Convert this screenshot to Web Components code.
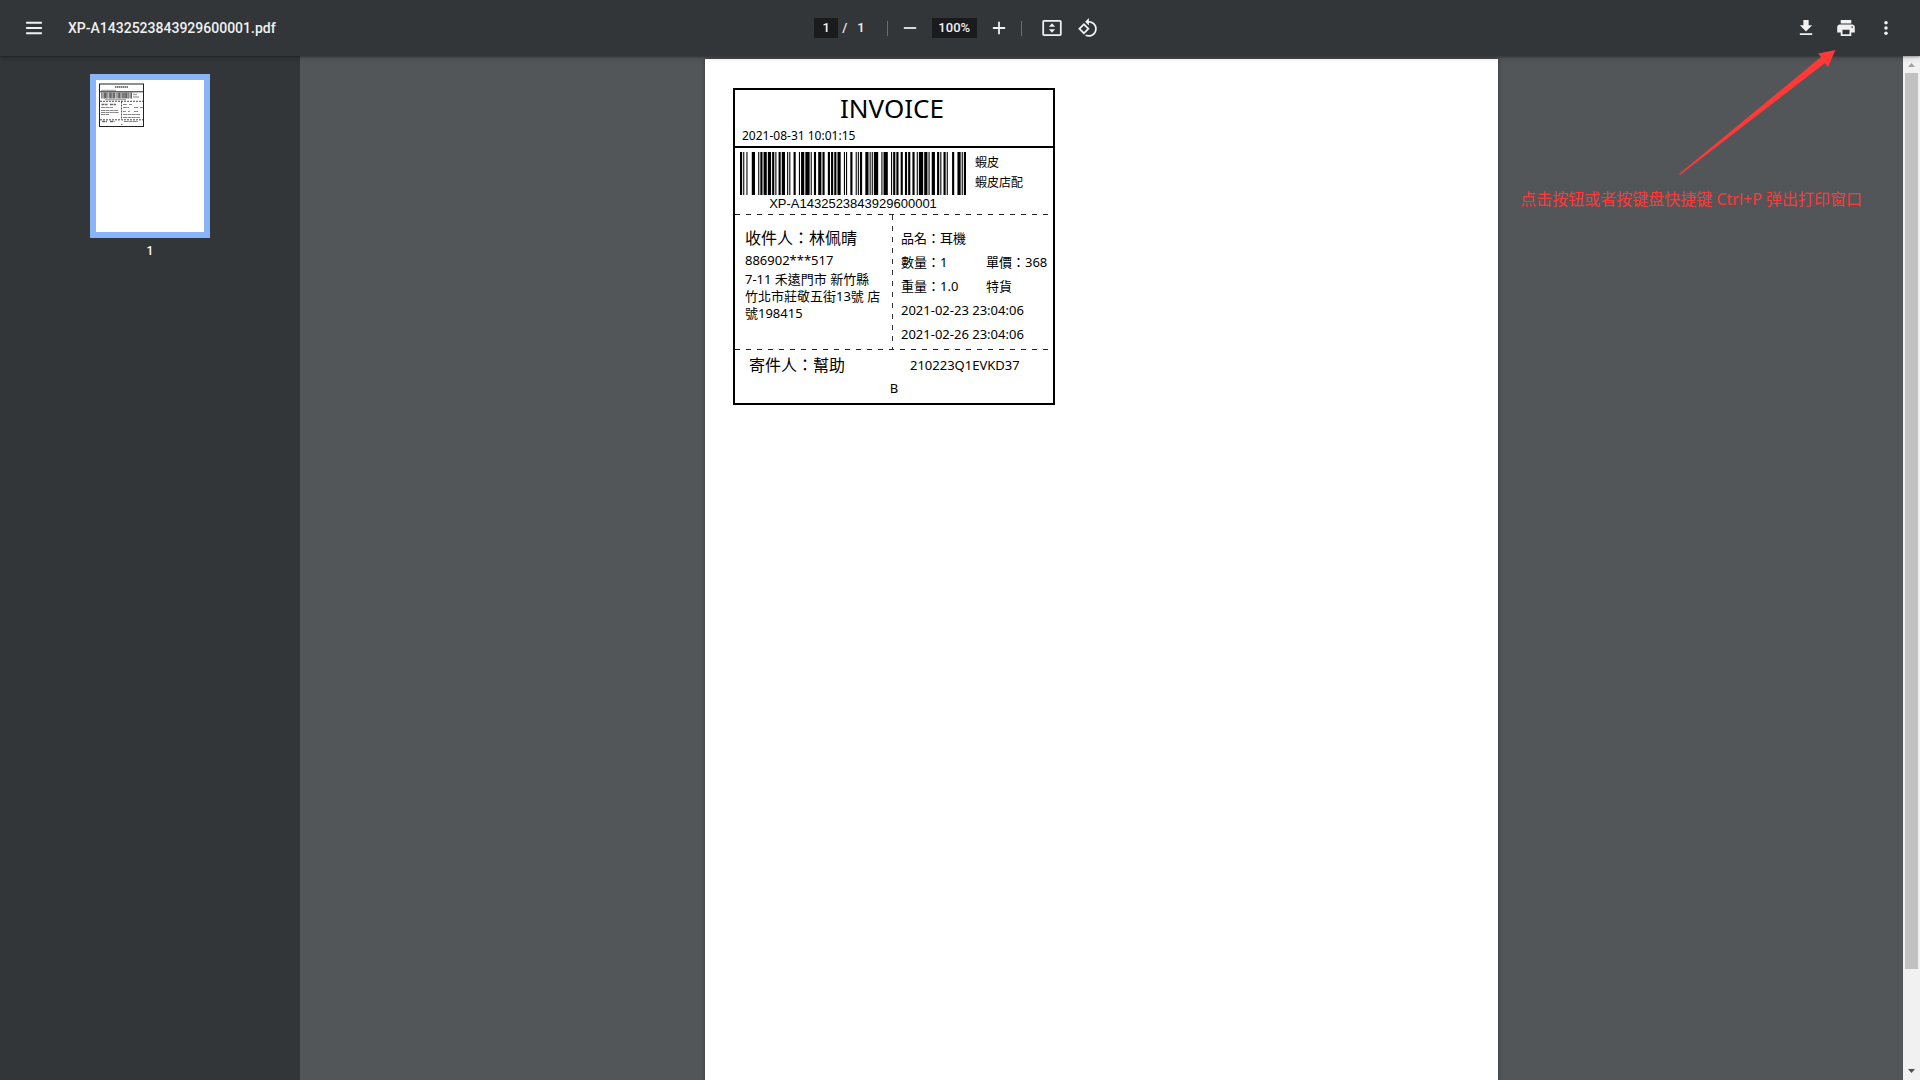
<!DOCTYPE html>
<html lang="zh-Hant">
<head>
<meta charset="utf-8">
<title>XP-A1432523843929600001.pdf</title>
<style>
  html, body { margin: 0; height: 100%; overflow: hidden; background: #525659; }
  body { font-family: Roboto, "Liberation Sans", sans-serif; }
</style>
</head>
<body>
<pdf-viewer></pdf-viewer>
<script>
const define = (name, markup, ready) => {
  const template = document.createElement('template');
  template.innerHTML = markup;
  customElements.define(name, class extends HTMLElement {
    constructor() {
      super();
      this.attachShadow({ mode: 'open' }).append(template.content.cloneNode(true));
    }
    connectedCallback() { if (ready) ready(this, this.shadowRoot); }
  });
};

const ICONS = {
  menu: '<path d="M3 5h18v2.2H3zM3 10.9h18v2.2H3zM3 16.8h18V19H3z"/>',
  minus: '<path d="M5 11h14v2H5z"/>',
  plus: '<path d="M19 13h-6v6h-2v-6H5v-2h6V5h2v6h6z"/>',
  fit: '<path fill-rule="evenodd" d="M3 3h18c1.1 0 2 .9 2 2v14c0 1.100-.9 2-2 2H3c-1.100 0-2-.9-2-2V5c0-1.100.9-2 2-2zm0 2v14h18V5H3z"/><path d="M12 6.500l3.500 4h-7zM12 17.500l-3.500-4h7z"/>',
  rotate: '<path d="M7.340 6.410L.86 12.900l6.490 6.480 6.490-6.480-6.500-6.490zM3.690 12.900l3.660-3.660L11 12.900l-3.660 3.660-3.650-3.660zm15.670-6.260C17.610 4.880 15.300 4 13 4V.76L8.760 5 13 9.240V6c1.790 0 3.580.68 4.950 2.050 2.730 2.730 2.730 7.170 0 9.900C16.580 19.320 14.790 20 13 20c-.97 0-1.940-.21-2.840-.61l-1.490 1.490C10.020 21.620 11.510 22 13 22c2.300 0 4.610-.88 6.360-2.640 3.520-3.510 3.520-9.210 0-12.720z"/>',
  download: '<path d="M19 9h-4V3H9v6H5l7 7 7-7zM5 18v2h14v-2H5z"/>',
  print: '<path d="M19 8H5c-1.660 0-3 1.340-3 3v6h4v4h12v-4h4v-6c0-1.660-1.340-3-3-3zm-3 11H8v-5h8v5zm3-7c-.55 0-1-.45-1-1s.45-1 1-1 1 .45 1 1-.45 1-1 1zm-1-9H6v4h12V3z"/>',
  more: '<circle cx="12" cy="6" r="2"/><circle cx="12" cy="12" r="2"/><circle cx="12" cy="18" r="2"/>'
};

define('tool-button', `
<style>
  :host { display: block; }
  button { display: grid; place-items: center; width: 32px; height: 32px; padding: 0; border: 0; border-radius: 50%; background: none; color: #f1f1f1; cursor: pointer; }
  button:hover { background: rgba(255,255,255,.08); }
  svg { width: 22px; height: 22px; fill: currentColor; display: block; }
</style>
<button type="button"><svg viewBox="-.5 -.5 25 25" aria-hidden="true"></svg></button>`,
(host, root) => {
  root.querySelector('svg').innerHTML = ICONS[host.getAttribute('icon')];
  root.querySelector('button').setAttribute('aria-label', host.getAttribute('label'));
});

define('pdf-toolbar', `
<style>
  :host { display: grid; grid-template-columns: 1fr auto 1fr; align-items: center; height: 56px; box-sizing: border-box; padding: 0 18px;
    background: #323639; color: #f1f1f1; font: 500 13px/20px Roboto, sans-serif; position: relative; z-index: 1;
    box-shadow: 0 1px 2px rgba(0,0,0,.3), 0 2px 6px rgba(0,0,0,.15); }
  .start, .middle, .end { display: flex; align-items: center; }
  .start { gap: 18px; }
  .middle { padding-right: 2px; }
  .end { justify-content: flex-end; gap: 8px; }
  h1 { margin: 0; font: 500 14px/20px Roboto, sans-serif; }
  input { box-sizing: border-box; height: 20px; padding: 0; border: 0; background: #191b1c; color: #f1f1f1; font: inherit; text-align: center; }
  .page { width: 24px; }
  .zoom { width: 45px; margin: 0 6px; }
  .total { display: flex; gap: 10px; padding: 0 16px 0 4px; }
  i { width: 1px; height: 15px; margin: 0 6px; background: #6b6e70; }
  .fit { display: flex; gap: 4px; margin-left: 8px; }
</style>
<div class="start"><tool-button icon="menu" label="Menu"></tool-button><h1>XP-A1432523843929600001.pdf</h1></div>
<div class="middle">
  <input class="page" aria-label="Page number" value="1">
  <div class="total"><span>/</span><span>1</span></div>
  <i></i>
  <tool-button icon="minus" label="Zoom out"></tool-button>
  <input class="zoom" aria-label="Zoom level" value="100%">
  <tool-button icon="plus" label="Zoom in"></tool-button>
  <i></i>
  <div class="fit">
    <tool-button icon="fit" label="Fit to page"></tool-button>
    <tool-button icon="rotate" label="Rotate counterclockwise"></tool-button>
  </div>
</div>
<div class="end">
  <tool-button icon="download" label="Download"></tool-button>
  <tool-button icon="print" label="Print"></tool-button>
  <tool-button icon="more" label="More actions"></tool-button>
</div>`);

/* Code 128 symbol widths, keyed by symbol value. */
const SYMBOLS = { 0: '212222', 13: '122132', 14: '122231', 17: '123221', 32: '232121', 33: '111323', 38: '132311', 43: '112331',
  48: '313121', 52: '213311', 56: '331121', 71: '122114', 92: '111143', 96: '114311', 99: '113141', 100: '114131', 104: '211214', stop: '2331112' };
/* Start B, "XP-A", switch to C, nine digit pairs, switch to B, "1", checksum, stop. */
const CODE = [104, 56, 48, 13, 33, 99, 14, 32, 52, 38, 43, 92, 96, 0, 0, 100, 17, 71, 'stop'];
const barcodePath = () => {
  let x = 0, d = '';
  for (const value of CODE) {
    [...SYMBOLS[value]].forEach((w, i) => {
      if (i % 2 === 0) d += `M${x} 0h${w}v1h-${w}z`;
      x += Number(w);
    });
  }
  return { d, width: x };
};

define('bar-code', `
<style>
  :host { display: block; width: 226px; text-align: center; font: 13px/18px "Liberation Sans", sans-serif; }
  svg { display: block; width: 100%; height: 43px; }
</style>
<svg preserveAspectRatio="none" aria-hidden="true"><path fill="#000"/></svg>
<slot></slot>`,
(host, root) => {
  const { d, width } = barcodePath();
  root.querySelector('svg').setAttribute('viewBox', `0 0 ${width} 1`);
  root.querySelector('path').setAttribute('d', d);
});

define('shipping-label', `
<style>
  :host { display: block; box-sizing: border-box; width: 322px; border: 2px solid #000; color: #000;
    font: 13px/24px "Noto Sans", "Noto Sans CJK TC", sans-serif; white-space: nowrap;
    --across: repeating-linear-gradient(90deg, #222 0 5px, transparent 5px 11px);
    --down: repeating-linear-gradient(180deg, #333 0 5px, transparent 5px 11px); }
  h2, p { margin: 0; font-weight: 400; }
  header { padding-bottom: 2px; border-bottom: 2px solid #000; }
  h2 { padding: 0 4px 2px 0; font-size: 26px; line-height: 36px; text-align: center; }
  header p { padding-left: 7px; font-size: 12px; line-height: 16px; }
  .code { display: flex; gap: 9px; padding: 4px 5px 1px; }
  .carrier { padding-top: 1px; font-size: 12px; line-height: 20px; }
  .parties { display: grid; grid-template-columns: 157px 1px 1fr; padding-top: 1px; background: var(--across) top / 100% 1px no-repeat; }
  .rule { background: var(--down); }
  .to { padding: 12px 0 0 10px; line-height: 17px; }
  .name { font-size: 16px; line-height: 22px; }
  .phone { line-height: 22px; }
  .goods { padding: 11px 0 3px 8px; }
  .pair { display: grid; grid-template-columns: 85px auto; }
  footer { padding: 4px 0; background: var(--across) top / 100% 1px no-repeat; }
  .from { display: grid; grid-template-columns: 161px auto; align-items: center; padding-left: 14px; }
  .zone { line-height: 22px; text-align: center; }
</style>
<header><h2>INVOICE</h2><p>2021-08-31 10:01:15</p></header>
<div class="code">
  <bar-code>XP-A1432523843929600001</bar-code>
  <div class="carrier"><p>蝦皮</p><p>蝦皮店配</p></div>
</div>
<div class="parties">
  <div class="to">
    <p class="name">收件人：林佩晴</p>
    <p class="phone">886902***517</p>
    <p>7-11 禾遠門市 新竹縣<br>竹北市莊敬五街13號 店<br>號198415</p>
  </div>
  <div class="rule"></div>
  <div class="goods">
    <p>品名：耳機</p>
    <div class="pair"><span>數量：1</span><span>單價：368</span></div>
    <div class="pair"><span>重量：1.0</span><span>特貨</span></div>
    <p>2021-02-23 23:04:06</p>
    <p>2021-02-26 23:04:06</p>
  </div>
</div>
<footer>
  <div class="from"><span class="name">寄件人：幫助</span><span>210223Q1EVKD37</span></div>
  <p class="zone">B</p>
</footer>`);

define('page-thumbnail', `
<style>
  :host { display: flex; flex-direction: column; align-items: center; gap: 3px; color: #fff; font: 500 12px/20px Roboto, sans-serif; }
  button { display: block; padding: 0; border: 6px solid #8ab4f8; background: #fff; }
  svg { display: block; width: 108px; height: 152px; }
</style>
<button type="button" aria-label="Page 1">
  <svg viewBox="0 0 108 152" fill="none" stroke="#222" aria-hidden="true">
    <rect x="3.500" y="4" width="44" height="42.500"/>
    <path d="M3 11.800h45"/>
    <path stroke="#777" stroke-width="2.200" stroke-dasharray="1.500 .5" d="M19 7h13"/>
    <path stroke="#999" d="M5 10.300h15"/>
    <g class="bars"></g>
    <path stroke="#aaa" stroke-width="1.400" d="M37 14.500h4M37 17h6M9 19.500h21"/>
    <path stroke-width=".8" stroke-dasharray="2 1" d="M4 21.300h44M4 39.800h44M25.500 21.500v18"/>
    <path stroke="#666" stroke-width="1.500" stroke-dasharray="3 .6" d="M5.500 24.500h6M14 24.500h6M6 41.500h5M14 41.500h4.500"/>
    <path stroke="#888" stroke-width="1.200" stroke-dasharray="4 .4" d="M5 27.500h12M5 30.500h17M5 32.500h18M5 34.500h8M27 24.500h4M33 24.500h3M27 27.500h6M38 27.500h4M44 27.500h3M27 31.500h3M32 31.500h2M38 31.500h4M27 34.500h17M27 37.500h17M28 41.500h14M25 44.500h1.500"/>
  </svg>
</button>
<slot></slot>`,
(host, root) => {
  const { d, width } = barcodePath();
  root.querySelector('.bars').innerHTML = `<path fill="#222" stroke="none" transform="translate(5 12.600) scale(${31 / width} 6)" d="${d}"/>`;
});

define('page-scrollbar', `
<style>
  :host { display: flex; flex-direction: column; align-items: center; width: 17px; background: #f1f1f1; }
  svg { display: block; width: 17px; height: 17px; }
  .track { flex: 1; min-height: 0; align-self: stretch; padding: 0 2px; }
  .thumb { height: 90.500%; background: #c1c1c1; }
</style>
<svg viewBox="0 0 17 17"><path fill="#a3a3a3" d="M5 11l3.500-4 3.500 4z"/></svg>
<div class="track"><div class="thumb"></div></div>
<svg viewBox="0 0 17 17"><path fill="#505050" d="M5 6l3.500 4L12 6z"/></svg>`);

define('print-hint', `
<style>
  :host { position: absolute; z-index: 2; top: 50px; right: 58px; display: flex; flex-direction: column; align-items: flex-end; gap: 12px;
    color: #ff3838; font: 16px/24px "Noto Sans", "Noto Sans CJK SC", sans-serif; pointer-events: none; }
  svg { display: block; width: 158px; height: 125px; margin-right: 26px; }
  p { margin: 0; }
</style>
<svg viewBox="0 0 158 125" aria-hidden="true"><path fill="#ff3838" d="M157.500 0l-17.500 3.500 3 3.500L1 124l1 1L147 13l3 4z"/></svg>
<p lang="zh-Hans"><slot></slot></p>`);

define('pdf-viewer', `
<style>
  :host { position: relative; display: flex; flex-direction: column; height: 100vh; overflow: hidden; background: #525659; }
  main { flex: 1; min-height: 0; display: flex; }
  aside { width: 300px; padding-top: 18px; box-sizing: border-box; background: #323639; }
  .canvas { flex: 1; min-width: 0; overflow: hidden; padding-top: 3px; }
  .sheet { box-sizing: border-box; width: 793px; aspect-ratio: 210 / 297; margin: 0 auto; padding: 29px 28px; background: #fff; box-shadow: 0 0 4px rgba(0,0,0,.35); }
</style>
<pdf-toolbar></pdf-toolbar>
<main>
  <aside><page-thumbnail>1</page-thumbnail></aside>
  <div class="canvas"><div class="sheet"><shipping-label></shipping-label></div></div>
  <page-scrollbar></page-scrollbar>
</main>
<print-hint>点击按钮或者按键盘快捷键 Ctrl+P 弹出打印窗口</print-hint>`);
</script>
</body>
</html>
